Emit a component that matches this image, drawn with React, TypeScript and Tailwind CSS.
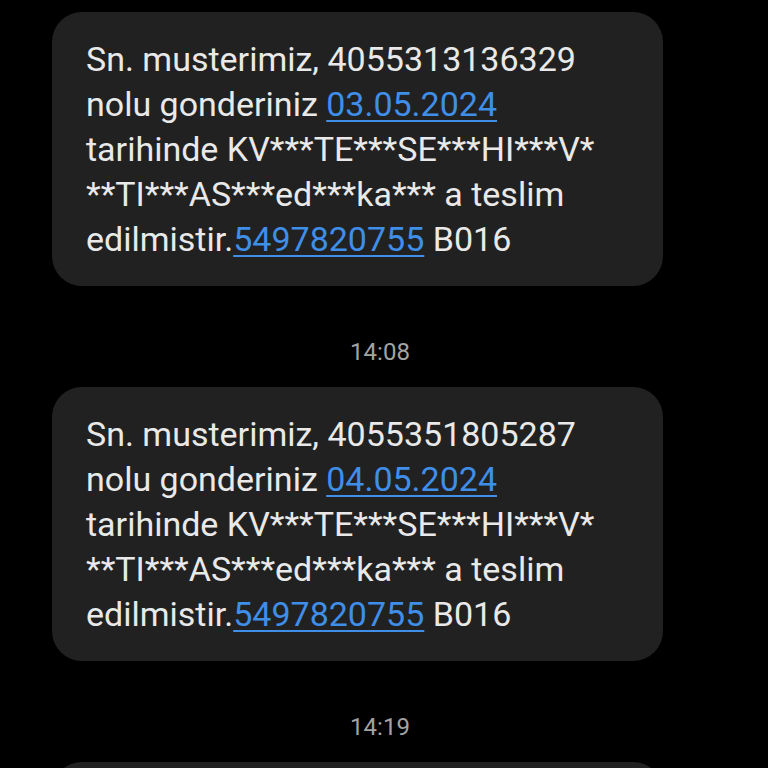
const link = 'text-[#3f8ee8] underline decoration-2 underline-offset-[4px]'

type Message = {
  number: string
  date: string
  time?: string
}

const messages: Message[] = [
  { number: '4055313136329', date: '03.05.2024', time: '14:08' },
  { number: '4055351805287', date: '04.05.2024', time: '14:19' },
  { number: '4055351805287', date: '04.05.2024' },
]

function Bubble({ m }: { m: Message }) {
  return (
    <div className="w-[611px] ml-[52px] rounded-[30px] bg-[#212121] pl-[34px] pr-4 pt-[25px] pb-[24px] text-[34px] leading-[45px] text-[#e9e9e9]">
      <div>Sn. musterimiz, {m.number}</div>
      <div>
        nolu gonderiniz <span className={link}>{m.date}</span>
      </div>
      <div>tarihinde KV***TE***SE***HI***V*</div>
      <div>**TI***AS***ed***ka*** a teslim</div>
      <div>
        edilmistir.<span className={link}>5497820755</span> B016
      </div>
    </div>
  )
}

export default function App() {
  return (
    <div
      className="h-[768px] w-[768px] overflow-hidden bg-black pt-[12px]"
      style={{ fontFamily: 'Roboto, "Noto Sans", sans-serif' }}
    >
      {messages.map((m, i) => (
        <div key={i}>
          <Bubble m={m} />
          {m.time && (
            <div className="mt-[52px] mb-[21px] w-[760px] text-center text-[24px] leading-[28px] text-[#a3a3a3]">
              {m.time}
            </div>
          )}
        </div>
      ))}
    </div>
  )
}
